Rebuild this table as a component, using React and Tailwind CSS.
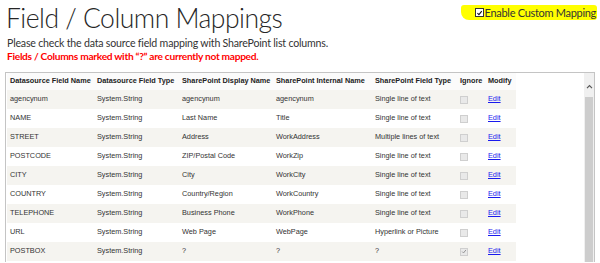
const ROWS = [
  ['agencynum', 'System.String', 'agencynum', 'agencynum', 'Single line of text', false],
  ['NAME', 'System.String', 'Last Name', 'Title', 'Single line of text', false],
  ['STREET', 'System.String', 'Address', 'WorkAddress', 'Multiple lines of text', false],
  ['POSTCODE', 'System.String', 'ZIP/Postal Code', 'WorkZip', 'Single line of text', false],
  ['CITY', 'System.String', 'City', 'WorkCity', 'Single line of text', false],
  ['COUNTRY', 'System.String', 'Country/Region', 'WorkCountry', 'Single line of text', false],
  ['TELEPHONE', 'System.String', 'Business Phone', 'WorkPhone', 'Single line of text', false],
  ['URL', 'System.String', 'Web Page', 'WebPage', 'Hyperlink or Picture', false],
  ['POSTBOX', 'System.String', '?', '?', '?', true],
]

const HEADERS = [
  'Datasource Field Name',
  'Datasource Field Type',
  'SharePoint Display Name',
  'SharePoint Internal Name',
  'SharePoint Field Type',
  'Ignore',
  'Modify',
]

function Tick({ className }) {
  return (
    <svg viewBox="0 0 10 10" className={className}>
      <path d="M2 5.2 L4.2 7.4 L8.2 2.4" fill="none" stroke="currentColor" strokeWidth="1.5" />
    </svg>
  )
}

export default function App() {
  return (
    <div className="w-[600px] h-[263px] overflow-hidden bg-white text-[#222] font-['Lato',sans-serif]">
      <div className="flex justify-between items-start h-[37px] pl-[6px] pr-[3px]">
        <h1 className="text-[26.5px] tracking-[-0.5px] font-light leading-[30px] pt-[3px] text-[#262626]">
          Field / Column Mappings
        </h1>
        <label className="mt-[5px] flex items-center h-[15px] pl-[14px] pr-[1px] bg-[#ffff00] rounded-[3px] rounded-bl-[8px]">
          <span className="w-[9px] h-[9px] border border-[#333] bg-white flex items-center justify-center text-[#111] mr-[1px]">
            <Tick className="w-[8px] h-[8px]" />
          </span>
          <span className="text-[11px] tracking-[-0.3px] leading-none text-[#333]">Enable Custom Mapping</span>
        </label>
      </div>
      <p className="pl-[7px] text-[10.6px] tracking-[-0.2px] leading-[13px] h-[13px] text-[#333]">
        Please check the data source field mapping with SharePoint list columns.
      </p>
      <p className="pl-[7px] text-[10.2px] tracking-[-0.3px] leading-[13px] h-[13px] font-bold text-[#ff0000]">
        Fields / Columns marked with “?” are currently not mapped.
      </p>
      <div className="mt-[9px] mx-[5px] border-t border-l border-r border-[#c4c4c4] flex h-[190px]">
        <div className="flex-1 pl-[1px] font-['Liberation_Sans',Arial,sans-serif] text-[7.3px] text-[#333]">
          <table className="table-fixed border-collapse w-[509px]">
            <colgroup>
              <col className="w-[87px]" />
              <col className="w-[85px]" />
              <col className="w-[94px]" />
              <col className="w-[99px]" />
              <col className="w-[85px]" />
              <col className="w-[28px]" />
              <col className="w-[31px]" />
            </colgroup>
            <thead>
              <tr className="h-[17px] bg-[#fbfbfb]">
                {HEADERS.map((h) => (
                  <th key={h} className="text-left font-bold pl-[3px] whitespace-nowrap text-[#222]">
                    {h}
                  </th>
                ))}
              </tr>
            </thead>
            <tbody>
              {ROWS.map((r, i) => (
                <tr key={r[0]} className={i % 2 === 0 ? 'h-[19px] bg-[#f5f4f0]' : 'h-[19px] bg-white'}>
                  <td className="pl-[3px] whitespace-nowrap">{r[0]}</td>
                  <td className="pl-[3px] whitespace-nowrap">{r[1]}</td>
                  <td className="pl-[3px] whitespace-nowrap">{r[2]}</td>
                  <td className="pl-[3px] whitespace-nowrap">{r[3]}</td>
                  <td className="pl-[3px] whitespace-nowrap">{r[4]}</td>
                  <td className="pl-[3px]">
                    <span className="w-[8px] h-[8px] border border-[#cfcfcf] bg-[#e9e9e9] flex items-center justify-center text-[#8a8a8a]">
                      {r[5] && <Tick className="w-[7px] h-[7px]" />}
                    </span>
                  </td>
                  <td className="pl-[3px]">
                    <a href="#" className="text-[#1a1aee] underline">Edit</a>
                  </td>
                </tr>
              ))}
            </tbody>
          </table>
        </div>
        <div className="w-[10px] flex flex-col bg-[#f0f0f0]">
          <div className="h-[24px] pt-[2px] flex items-center justify-center text-[#555]">
            <svg viewBox="0 0 8 6" className="w-[7px] h-[5px]">
              <path d="M1 5 L4 2 L7 5" fill="none" stroke="currentColor" strokeWidth="1.4" />
            </svg>
          </div>
          <div className="flex-1 bg-[#cdcdcd] mx-[1px]" />
        </div>
      </div>
    </div>
  )
}
